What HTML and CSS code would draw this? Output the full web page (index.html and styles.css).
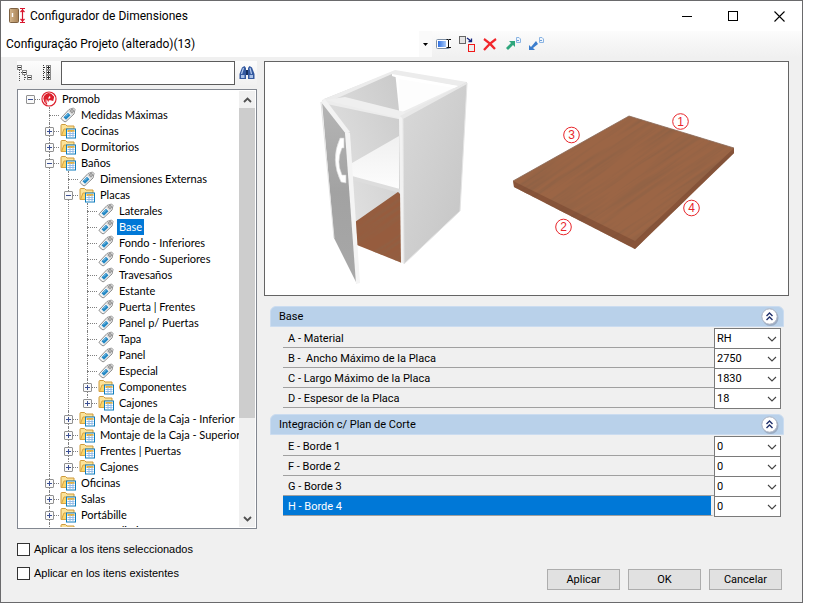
FILE: index.html
```html
<!DOCTYPE html>
<html lang="es">
<head>
<meta charset="utf-8">
<title>Configurador de Dimensiones</title>
<link rel="stylesheet" href="styles.css">
</head>
<body>
<svg class="sprite" aria-hidden="true">
  <symbol id="tag" viewBox="0 0 16 16">
    <path d="M1.500 10.500 9 2.500 13.500 1 15 2.500 14 7 6 14.500Q5 15.300 4 14.300L1.300 12Q.7 11.300 1.500 10.500Z" fill="#f4f4f4" stroke="#8d8d8d"/>
    <path d="M9.500 3 13.500 1.500 14.500 2.500 13.500 6.500 12 8 8.200 4.300Z" fill="#d2d2d2"/>
    <path d="M3.500 10.300 8 5.800 10.500 8.300 6 12.800Z" fill="#2388c4"/>
    <path d="M5.500 9.500 8.500 7" stroke="#7cc0e6"/>
    <circle cx="12" cy="4" r="1.300" fill="#fff" stroke="#777"/>
  </symbol>
  <symbol id="folder" viewBox="0 0 17 16">
    <path d="M1.500 12.500V2.500Q1.500 1.500 2.500 1.500H6L7.500 3H14.500V12.500Z" fill="#fbe39a" stroke="#cf9a3b"/>
    <path d="M2 12.500 4.500 6H15V12.500Z" fill="#fbd568" stroke="#d9a544"/>
    <rect x="7" y="6" width="9" height="9" fill="#fff" stroke="#0f7dbd"/>
    <path d="M8 8H15" stroke="#e9b23c" stroke-width="2"/>
    <path d="M10.500 8V14M13.500 8V14M8 10.500H15M8 12.500H15" stroke="#93bce8"/>
  </symbol>
  <symbol id="promob" viewBox="0 0 17 17">
    <circle cx="8.500" cy="8.500" r="7.500" fill="#fff" stroke="#dc1f2b" stroke-width="1.200"/>
    <path d="M8 2Q3 3 2.500 8 2.700 12 6 14.500L6.500 14.500V10.500L7.500 9.500 8 12 9 9.500 13 10.500 14 6 11 3Z" fill="#dc1f2b"/>
    <path d="M8 7 9.500 5 10 7 8 9Z" fill="#fff"/>
    <path d="M5.500 9V12.500" stroke="#fff" stroke-width=".8"/>
  </symbol>
  <symbol id="chevron" viewBox="0 0 10 6">
    <path d="M1 1 5 5 9 1" fill="none" stroke="#444" stroke-width="1.100"/>
  </symbol>
  <symbol id="collapse" viewBox="0 0 20 20">
    <circle cx="10.500" cy="11" r="8" fill="#8f9db3" opacity=".7"/>
    <circle cx="9.500" cy="9.500" r="7.700" fill="#fff" stroke="#aab2c2"/>
    <path d="M6.500 9 9.500 6 12.500 9M6.500 13 9.500 10 12.500 13" fill="none" stroke="#1f2f6b" stroke-width="1.400"/>
  </symbol>
</svg>

<main class="window">
  <header class="titlebar">
    <svg class="app-icon" width="18" height="16" viewBox="0 0 18 16" aria-hidden="true">
      <defs><linearGradient id="door" x2="1"><stop stop-color="#d3b58c"/><stop offset="1" stop-color="#a98357"/></linearGradient></defs>
      <rect x="1.500" y=".5" width="9" height="14" rx="1" fill="url(#door)" stroke="#7d6142"/>
      <path d="M4.500 5V9" stroke="#fff" stroke-width="1.400"/>
      <path d="M12 .500H17M12 14.500H17M14.500 1V14M12.500 4 14.500 2 16.500 4M12.500 11 14.500 13 16.500 11" fill="none" stroke="#d8142c" stroke-width="1.200"/>
    </svg>
    <h1>Configurador de Dimensiones</h1>
    <div class="window-buttons">
      <button aria-label="Minimizar"><svg width="11" height="11"><path d="M0 5.500H10" stroke="#000"/></svg></button>
      <button aria-label="Maximizar"><svg width="11" height="11"><rect x=".5" y=".5" width="9" height="9" fill="none" stroke="#000"/></svg></button>
      <button aria-label="Cerrar"><svg width="11" height="11"><path d="M.5.5 10.500 10.500M10.500.5.5 10.500" stroke="#000" stroke-width="1.100"/></svg></button>
    </div>
  </header>

  <div class="toolbar">
    <div class="project">
      <select aria-label="Configuración"><option>Configuração Projeto (alterado)(13)</option></select>
      <span class="project-arrow"><svg width="5" height="3"><path d="M0 0H5L2.500 3Z"/></svg></span>
    </div>
    <button aria-label="Renombrar"><svg width="16" height="16" viewBox="0 0 16 16">
      <defs><linearGradient id="field" x2="1"><stop stop-color="#2f6fe0"/><stop offset="1" stop-color="#a9cbfa"/></linearGradient></defs>
      <rect x=".5" y="3.500" width="13" height="9" rx="1" fill="#fff" stroke="#7d8fa5"/><rect x="2" y="5" width="8" height="6" fill="url(#field)"/>
      <path d="M13 4V12" stroke="#fff" stroke-width="3"/><path d="M10.500 3.500H12L12.500 4 13 3.500H15M12.500 4V11.500M10.500 11.500H15" fill="none" stroke="#111"/></svg></button>
    <button aria-label="Duplicar"><svg width="16" height="16" viewBox="0 0 16 16">
      <rect x=".5" y=".5" width="6" height="7" fill="#e4e4e4" stroke="#666"/><rect x="9.500" y="8.500" width="6" height="7" fill="#eee" stroke="#f01818"/>
      <path d="M8 2 12 5M12.500 2.500V5.500H9.500" fill="none" stroke="#16267f" stroke-width="1.300"/></svg></button>
    <button aria-label="Eliminar"><svg width="16" height="16" viewBox="0 0 16 16">
      <path d="M2 3Q8 7 13 13M14 3Q8 7 2 14" fill="none" stroke="#f2262b" stroke-width="2.200"/></svg></button>
    <button aria-label="Exportar"><svg width="16" height="16" viewBox="0 0 16 16">
      <path d="M1 12 6 7 4 5H10V11L8 9 3 14Z" fill="#2fa67c"/><path d="M11.500 1.500H14L15.500 3V6.500H11.500Z" fill="#eef5fd" stroke="#8bb4e2"/><path d="M12 4.500H14" stroke="#6d9fd8"/></svg></button>
    <button aria-label="Importar"><svg width="16" height="16" viewBox="0 0 16 16">
      <path d="M1 9 3 11 8 5 10 8 5 12 7 14H1Z" fill="#3b7dcd"/><path d="M11.500 1.500H14L15.500 3V6.500H11.500Z" fill="#eef5fd" stroke="#8bb4e2"/><path d="M12 4.500H14" stroke="#6d9fd8"/></svg></button>
  </div>

  <div class="content">
    <aside class="navigator">
      <div class="search-bar">
        <button aria-label="Contraer todo"><svg width="16" height="16" viewBox="0 0 16 16">
          <path d="M2.500 5V16M5 7.500H2M7.500 10V16M8 12.500H11" fill="none" stroke="#555" stroke-dasharray="1 1"/>
          <g fill="#fff" stroke="#8a8a8a"><rect x=".5" y=".5" width="4" height="4"/><rect x="5.500" y="5.500" width="4" height="4"/><rect x="10.500" y="10.500" width="4" height="4"/></g>
          <path d="M1 2.500H4M6 7.500H9M11 12.500H14" stroke="#222"/></svg></button>
        <button aria-label="Expandir todo"><svg width="16" height="16" viewBox="0 0 16 16">
          <path d="M4.500 0V16M5 2.500H8M5 7.500H8M5 12.500H8" fill="none" stroke="#333" stroke-dasharray="1 1"/>
          <g fill="#fff" stroke="#8a8a8a"><rect x="7.500" y=".5" width="4" height="4"/><rect x="7.500" y="5.500" width="4" height="4"/><rect x="7.500" y="10.500" width="4" height="4"/></g>
          <path d="M8 2.500H11M9.500 1V4M8 7.500H11M9.500 6V9M8 12.500H11M9.500 11V14" stroke="#222"/></svg></button>
        <input type="text" aria-label="Buscar">
        <button aria-label="Buscar siguiente"><svg width="16" height="16" viewBox="0 0 16 16">
          <path d="M3 2.500 5.500 1 7 3V14H.5V9Z M13 2.500 10.500 1 9 3V14H15.500V9Z" fill="#34599f"/><path d="M7 5H9V10H7Z" fill="#16305f"/>
          <path d="M4.500 3 2.500 9M11 3 12.500 9" stroke="#b5cbee" stroke-width="1.200"/><path d="M2 11.500H5.500M10.500 11.500H14" stroke="#a9c1e8" stroke-width="3"/></svg></button>
      </div>

      <div class="tree-box">
        <div class="tree-view">
        <ul class="tree">
          <li>
            <div class="node"><i class="twig open"></i><svg class="icon"><use href="#promob"/></svg><span>Promob</span></div>
            <ul>
              <li><div class="node"><i class="twig"></i><svg class="icon"><use href="#tag"/></svg><span>Medidas Máximas</span></div></li>
              <li><div class="node"><i class="twig closed"></i><svg class="icon"><use href="#folder"/></svg><span>Cocinas</span></div></li>
              <li><div class="node"><i class="twig closed"></i><svg class="icon"><use href="#folder"/></svg><span>Dormitorios</span></div></li>
              <li>
                <div class="node"><i class="twig open"></i><svg class="icon"><use href="#folder"/></svg><span>Baños</span></div>
                <ul>
                  <li><div class="node"><i class="twig"></i><svg class="icon"><use href="#tag"/></svg><span>Dimensiones Externas</span></div></li>
                  <li>
                    <div class="node"><i class="twig open"></i><svg class="icon"><use href="#folder"/></svg><span>Placas</span></div>
                    <ul>
                      <li><div class="node"><i class="twig"></i><svg class="icon"><use href="#tag"/></svg><span>Laterales</span></div></li>
                      <li><div class="node selected"><i class="twig"></i><svg class="icon"><use href="#tag"/></svg><span>Base</span></div></li>
                      <li><div class="node"><i class="twig"></i><svg class="icon"><use href="#tag"/></svg><span>Fondo - Inferiores</span></div></li>
                      <li><div class="node"><i class="twig"></i><svg class="icon"><use href="#tag"/></svg><span>Fondo - Superiores</span></div></li>
                      <li><div class="node"><i class="twig"></i><svg class="icon"><use href="#tag"/></svg><span>Travesaños</span></div></li>
                      <li><div class="node"><i class="twig"></i><svg class="icon"><use href="#tag"/></svg><span>Estante</span></div></li>
                      <li><div class="node"><i class="twig"></i><svg class="icon"><use href="#tag"/></svg><span>Puerta | Frentes</span></div></li>
                      <li><div class="node"><i class="twig"></i><svg class="icon"><use href="#tag"/></svg><span>Panel p/ Puertas</span></div></li>
                      <li><div class="node"><i class="twig"></i><svg class="icon"><use href="#tag"/></svg><span>Tapa</span></div></li>
                      <li><div class="node"><i class="twig"></i><svg class="icon"><use href="#tag"/></svg><span>Panel</span></div></li>
                      <li><div class="node"><i class="twig"></i><svg class="icon"><use href="#tag"/></svg><span>Especial</span></div></li>
                      <li><div class="node"><i class="twig closed"></i><svg class="icon"><use href="#folder"/></svg><span>Componentes</span></div></li>
                      <li><div class="node"><i class="twig closed"></i><svg class="icon"><use href="#folder"/></svg><span>Cajones</span></div></li>
                    </ul>
                  </li>
                  <li><div class="node"><i class="twig closed"></i><svg class="icon"><use href="#folder"/></svg><span>Montaje de la Caja - Inferior</span></div></li>
                  <li><div class="node"><i class="twig closed"></i><svg class="icon"><use href="#folder"/></svg><span>Montaje de la Caja - Superior</span></div></li>
                  <li><div class="node"><i class="twig closed"></i><svg class="icon"><use href="#folder"/></svg><span>Frentes | Puertas</span></div></li>
                  <li><div class="node"><i class="twig closed"></i><svg class="icon"><use href="#folder"/></svg><span>Cajones</span></div></li>
                </ul>
              </li>
              <li><div class="node"><i class="twig closed"></i><svg class="icon"><use href="#folder"/></svg><span>Oficinas</span></div></li>
              <li><div class="node"><i class="twig closed"></i><svg class="icon"><use href="#folder"/></svg><span>Salas</span></div></li>
              <li><div class="node"><i class="twig closed"></i><svg class="icon"><use href="#folder"/></svg><span>Portábille</span></div></li>
              <li><div class="node"><i class="twig closed"></i><svg class="icon"><use href="#folder"/></svg><span>Emprendimientos</span></div></li>
            </ul>
          </li>
        </ul>
        </div>
        <div class="scrollbar">
          <button aria-label="Subir"><svg width="9" height="6" viewBox="0 0 9 6"><path d="M1 5 4.500 1.500 8 5" fill="none" stroke="#505050" stroke-width="1.800"/></svg></button>
          <div class="scroll-track"><div class="scroll-thumb"></div></div>
          <button aria-label="Bajar"><svg width="9" height="6" viewBox="0 0 9 6"><path d="M1 1 4.500 4.500 8 1" fill="none" stroke="#505050" stroke-width="1.800"/></svg></button>
        </div>
      </div>

      <div class="options">
        <label><input type="checkbox">Aplicar a los itens seleccionados</label>
        <label><input type="checkbox">Aplicar en los itens existentes</label>
      </div>
    </aside>

    <section class="details">
      <svg class="preview" viewBox="265 62 523 233" role="img" aria-label="Mueble con la base y sus bordes numerados">
        <defs>
          <linearGradient id="side" x1="0" y1="0" x2="1" y2="1"><stop stop-color="#d9d9d9"/><stop offset="1" stop-color="#c4c4c4"/></linearGradient>
          <linearGradient id="front" x1="0" y1="0" x2="0" y2="1"><stop stop-color="#b5b5b5"/><stop offset=".5" stop-color="#a2a2a2"/><stop offset="1" stop-color="#a8a8a8"/></linearGradient>
          <linearGradient id="inner" x1="0" x2="1" y1="1" y2="0"><stop stop-color="#e9e9e9"/><stop offset="1" stop-color="#c9c9c9"/></linearGradient>
          <linearGradient id="shelf" x1="0" y1="0" x2="0" y2="1"><stop stop-color="#f0f0f0"/><stop offset="1" stop-color="#fdfdfd"/></linearGradient>
          <filter id="grain" x="0" y="0" width="100%" height="100%"><feTurbulence type="fractalNoise" baseFrequency=".012 .28" numOctaves="3" seed="4"/><feColorMatrix values="0 0 0 0 .27  0 0 0 0 .12  0 0 0 0 .06  2.200 0 0 0 -.850"/></filter>
          <clipPath id="board"><path d="M513 181 629 116 734 148V153L635 249 514 187Z"/></clipPath>
          <clipPath id="floor"><path d="M355 222 398 192 402 196V263L357 245Z"/></clipPath>
        </defs>
        <path d="M324 99 395 71 400 120 402 262 355 223Z" fill="url(#inner)"/>
        <path d="M399 77 460 86 405 112 399 110Z" fill="#fdfdfd"/>
        <path d="M322 100 395 70 467 82 403 117 400 113 458 86 392 76 392 74 333 100 403 112V120L322 103Z" fill="#ececec"/>
        <path d="M392 74 458 86 454 88 399 79V78L392 76Z" fill="#fff"/>
        <path d="M325 100 345 97 405 112 403 119Z" fill="#efefef"/>
        <path d="M352 163 399 136V190L352 178Z" fill="url(#shelf)"/>
        <path d="M352 176 400 189V193L352 180Z" fill="#ddd"/>
        <path d="M355 222 398 192 402 196V263L357 245Z" fill="#965c3e"/>
        <g clip-path="url(#floor)"><rect x="310" y="170" width="140" height="120" filter="url(#grain)" transform="rotate(-35 380 228)"/></g>
        <path d="M399 118 404 116V263H401Z" fill="#f2f2f2"/>
        <path d="M403 117 467 82 460 211 404 264Z" fill="url(#side)"/>
        <path d="M400 116 467 82V84L403 119Z" fill="#e8e8e8"/>
        <path d="M403 118 404 264 460 211 467 83" fill="none" stroke="#e4e4e4"/>
        <path d="M322 102 346 133 357 284 334 238Z" fill="url(#front)"/>
        <path d="M321 102 346 134 350 132 325 99Z" fill="#f3f3f3"/>
        <path d="M345 133 350 133 360 283 356 284Z" fill="#f4f4f4"/>
        <path d="M321 102 334 238" stroke="#e2e2e2"/>
        <path d="M344 138 340 138Q330 160 341 182L346 183 346 175 342 175Q336 162 342 148L344 148Z" fill="#fff" stroke="#d2d2d2" stroke-width=".6"/>
        <path d="M513 181 629 116 734 148V153L635 249 514 187Z" fill="#9b6545"/>
        <g clip-path="url(#board)"><rect x="480" y="40" width="300" height="280" filter="url(#grain)" transform="rotate(-34 623 182)"/></g>
        <path d="M513 181 635 241 734 148V153L635 249 514 187Z" fill="#6f3d27" opacity=".4"/>
        <path d="M513 181 629 116 734 148" fill="none" stroke="#8b6c5c" stroke-width=".8"/>
        <g class="marks">
          <circle cx="680.500" cy="121.500" r="7.800"/><text x="680.500" y="126">1</text>
          <circle cx="563.500" cy="227" r="7.800"/><text x="563.500" y="231">2</text>
          <circle cx="571.500" cy="135" r="7.800"/><text x="571.500" y="139">3</text>
          <circle cx="691.500" cy="208" r="7.800"/><text x="691.500" y="212">4</text>
        </g>
      </svg>

      <div class="groups">
        <section class="group">
          <h2>Base<button aria-label="Contraer Base"><svg width="20" height="20"><use href="#collapse"/></svg></button></h2>
          <div class="field"><label for="a">A - Material</label><div class="combo"><select id="a"><option>RH</option></select><svg><use href="#chevron"/></svg></div></div>
          <div class="field"><label for="b">B - &nbsp;Ancho Máximo de la Placa</label><div class="combo"><select id="b"><option>2750</option></select><svg><use href="#chevron"/></svg></div></div>
          <div class="field"><label for="c">C - Largo Máximo de la Placa</label><div class="combo"><select id="c"><option>1830</option></select><svg><use href="#chevron"/></svg></div></div>
          <div class="field"><label for="d">D - Espesor de la Placa</label><div class="combo"><select id="d"><option>18</option></select><svg><use href="#chevron"/></svg></div></div>
        </section>
        <section class="group">
          <h2>Integración c/ Plan de Corte<button aria-label="Contraer Integración"><svg width="20" height="20"><use href="#collapse"/></svg></button></h2>
          <div class="field"><label for="e">E - Borde 1</label><div class="combo"><select id="e"><option>0</option></select><svg><use href="#chevron"/></svg></div></div>
          <div class="field"><label for="f">F - Borde 2</label><div class="combo"><select id="f"><option>0</option></select><svg><use href="#chevron"/></svg></div></div>
          <div class="field"><label for="g">G - Borde 3</label><div class="combo"><select id="g"><option>0</option></select><svg><use href="#chevron"/></svg></div></div>
          <div class="field active"><label for="h">H - Borde 4</label><div class="combo"><select id="h"><option>0</option></select><svg><use href="#chevron"/></svg></div></div>
        </section>
      </div>

      <footer class="actions">
        <button>Aplicar</button>
        <button>OK</button>
        <button>Cancelar</button>
      </footer>
    </section>
  </div>
</main>
</body>
</html>
```

FILE: styles.css
```css
*, *::before, *::after { box-sizing: border-box; }

body {
  margin: 0;
  background: #fff;
  color: #000;
  font: 11px/16px Roboto, Arial, sans-serif;
}

button, input, select { font: inherit; color: inherit; }
button { padding: 0; border: 0; background: none; }
button svg { display: block; }
h1, h2 { margin: 0; font-size: inherit; font-weight: normal; }
ul { margin: 0; padding: 0; list-style: none; }

.sprite { position: absolute; width: 0; height: 0; }

.window {
  margin-right: 14px;
  border: 1px solid #6a6a6c;
  background: #f0f0f0;
}

.titlebar {
  display: flex;
  align-items: center;
  height: 30px;
  padding-left: 7px;
  background: #fff;
}
.titlebar h1 {
  flex: 1;
  margin-left: 4px;
  font: 12px/16px Roboto, sans-serif;
}
.window-buttons { display: flex; }
.window-buttons button {
  display: grid;
  place-items: center;
  width: 46px;
  height: 28px;
}

.toolbar {
  display: flex;
  align-items: center;
  gap: 7px;
  height: 26px;
  background: linear-gradient(#fcfcfc, #f0f0f0);
}
.project {
  position: relative;
  width: 431px;
  height: 26px;
  background: #fff;
  margin-right: -3px;
}
.project select {
  width: 100%;
  height: 26px;
  padding: 0 5px;
  border: 0;
  appearance: none;
  background: none;
  font: 12px/16px Roboto, sans-serif;
}
.project-arrow {
  position: absolute;
  inset: 0 0 0 auto;
  display: grid;
  place-items: center;
  width: 13px;
  background: #fafafa;
  pointer-events: none;
}

.content {
  display: flex;
  gap: 7px;
  padding: 4px 13px 12px 16px;
}

.navigator { flex: 0 0 240px; min-width: 0; }
.search-bar {
  display: flex;
  align-items: center;
  height: 24px;
  margin-bottom: 4px;
  background: linear-gradient(#fcfcfc, #f1f1f1);
}
.search-bar button:nth-child(2) { margin: 0 5px 0 6px; }
.search-bar input {
  flex: 1;
  min-width: 0;
  height: 24px;
  margin: 0 4px 0 1px;
  border: 1px solid #5c5c5c;
  background: #fff;
}
.search-bar button:last-child { margin-right: 2px; }

.tree-box {
  display: flex;
  height: 440px;
  padding: 1px;
  border: 1px solid #828790;
  background: #fff;
}
.tree-view {
  flex: 1;
  min-width: 0;
  overflow: hidden;
  font-family: Lato, sans-serif;
}
.tree { padding-left: 2px; }
.tree ul { padding-left: 19px; }
.tree li { position: relative; }
.tree ul > li::before {
  content: "";
  position: absolute;
  left: 9px;
  top: 0;
  bottom: 0;
  border-left: 1px dotted #808080;
}
.tree ul ul > li:last-child::before { bottom: 7px; }
.node {
  display: flex;
  align-items: center;
  height: 16px;
  white-space: nowrap;
}
.twig {
  position: relative;
  flex: none;
  width: 19px;
  height: 16px;
}
.twig::before {
  content: "";
  position: absolute;
  left: 9px;
  right: 0;
  top: 8px;
  border-top: 1px dotted #808080;
}
.open::after, .closed::after {
  content: "";
  position: absolute;
  left: 5px;
  top: 4px;
  width: 9px;
  height: 9px;
  border: 1px solid #919191;
  border-radius: 1px;
  background: linear-gradient(#3b4f93, #3b4f93) center / 5px 1px no-repeat, #fafafa;
}
.closed::after {
  background: linear-gradient(#3b4f93, #3b4f93) center / 5px 1px no-repeat, linear-gradient(#3b4f93, #3b4f93) center / 1px 5px no-repeat, #fafafa;
}
.icon { flex: none; width: 18px; height: 16px; margin-right: 2px; }
.node span { padding: 0 2px; }
.selected span { background: #0078d7; color: #fff; }

.scrollbar {
  display: flex;
  flex-direction: column;
  flex: none;
  width: 16px;
  background: #f0f0f0;
}
.scrollbar button {
  display: grid;
  place-items: center;
  height: 17px;
}
.scroll-track { flex: 1; }
.scroll-thumb { height: 77%; background: #cdcdcd; }

.options { display: grid; gap: 8px; padding: 12px 0 9px; }
.options label {
  display: flex;
  align-items: center;
  gap: 4px;
  font-family: "Liberation Sans", Arial, sans-serif;
}
.options input {
  width: 13px;
  height: 13px;
  margin: 0;
  border: 1px solid #333;
  background: #fff;
  appearance: none;
}

.details { flex: 1; min-width: 0; display: flex; flex-direction: column; }
.preview {
  display: block;
  width: 100%;
  border: 1px solid #646464;
  background: #fff;
}
.marks circle { fill: none; stroke: #e8262b; }
.marks text {
  fill: #e8262b;
  font-family: "Liberation Sans", Arial, sans-serif;
  font-size: 12px;
  text-anchor: middle;
}

.groups {
  display: grid;
  gap: 6px;
  padding: 10px 5px 0 6px;
}
.group h2 {
  display: flex;
  align-items: center;
  justify-content: space-between;
  height: 21px;
  margin-bottom: 1px;
  padding: 0 3px 0 8px;
  border: 1px solid #cbdcf0;
  border-radius: 6px 6px 0 0;
  background: #b9d1ea;
}
.field {
  display: flex;
  height: 20px;
  margin: 0 3px 0 13px;
}
.field label {
  flex: 1;
  padding: 3px 5px 0;
  border-bottom: 1px solid #a0a0a0;
}
.active label {
  border-right: 3px solid #f0f0f0;
  background: #0078d7;
  color: #fff;
}
.combo { position: relative; width: 67px; height: 21px; }
.combo select {
  width: 100%;
  height: 21px;
  padding: 0 2px;
  border: 1px solid #7a7a7a;
  border-radius: 0;
  appearance: none;
  background: #fff;
}
.combo svg {
  position: absolute;
  right: 4px;
  top: 8px;
  width: 10px;
  height: 6px;
  pointer-events: none;
}

.actions {
  display: flex;
  justify-content: flex-end;
  gap: 8px;
  margin-top: auto;
  padding-right: 7px;
}
.actions button {
  width: 73px;
  height: 21px;
  border: 1px solid #adadad;
  background: #e1e1e1;
}
```
